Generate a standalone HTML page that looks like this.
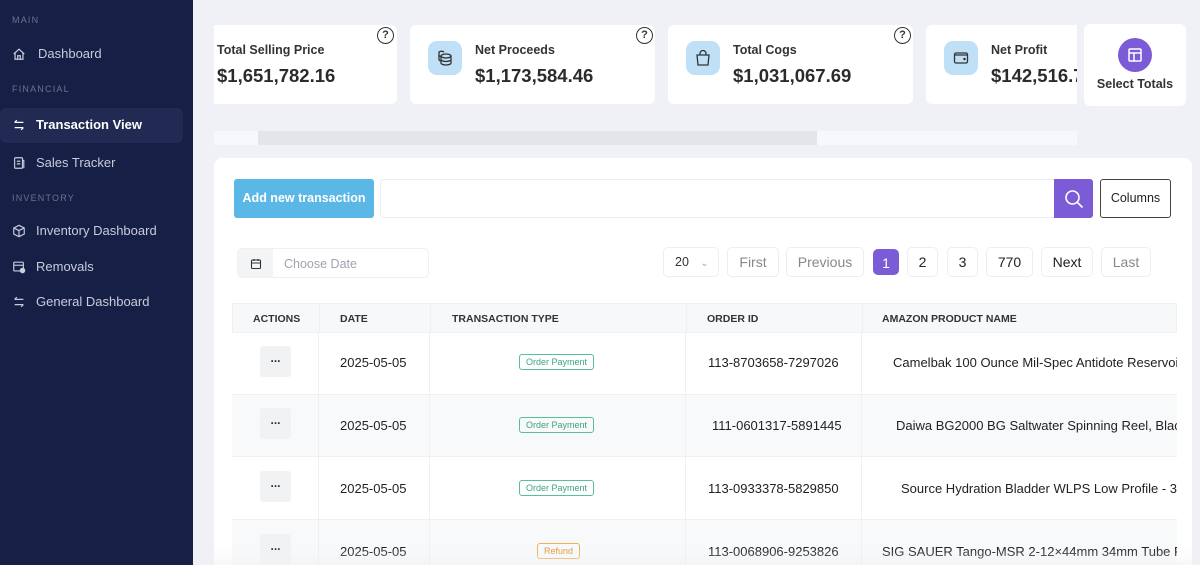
<!DOCTYPE html>
<html style="overflow:hidden;height:565px"><head><style>
*{box-sizing:border-box;margin:0;padding:0}
body{width:1200px;height:565px;overflow:hidden;background:#eff1f6;font-family:"Liberation Sans",sans-serif;position:relative}
.sb{position:absolute;left:0;top:0;width:193px;height:565px;background:#161f45}
.sec{position:absolute;left:12px;font-size:9px;letter-spacing:1.2px;color:#6c7391}
.it{position:absolute;left:12px;font-size:13px;color:#c8ccdb;display:flex;align-items:center;gap:10px}
.it svg{width:14px;height:14px}
.act{position:absolute;left:0;top:108px;width:183px;height:35px;background:#202a52;border-radius:6px}
.card{position:absolute;top:25px;height:79px;background:#fff;border-radius:6px;overflow:hidden}
.lbl{position:absolute;font-size:12.5px;font-weight:bold;color:#333}
.val{position:absolute;font-size:18.5px;font-weight:bold;color:#2b2b2b}
.ic{position:absolute;left:18px;top:16px;width:34px;height:34px;border-radius:9px;background:#bfe0f7;display:flex;align-items:center;justify-content:center}
.q{position:absolute;top:2px;width:17px;height:17px;border:1.5px solid #333;border-radius:50%;font-size:11px;font-weight:bold;text-align:center;line-height:14px;color:#333}
.panel{position:absolute;left:214px;top:158px;width:978px;height:407px;background:#fff;border-radius:8px 8px 0 0}
.pg{position:absolute;top:247px;height:30px;border:1px solid #eceef1;border-radius:5px;font-size:14px;color:#888;text-align:center;line-height:28px;background:#fff}
.th{position:absolute;top:303px;height:30px;background:#f7f8fa;left:232px;width:945px;border:1px solid #eef0f2}
.th span{position:absolute;top:9px;font-size:10.5px;font-weight:bold;color:#333}
.row{position:absolute;left:232px;width:945px;border-bottom:1px solid #eef0f2}
.row .c{position:absolute;top:0;bottom:0;border-left:1px solid #eef0f2}
.row span{position:absolute;font-size:13px;color:#222;white-space:nowrap}
.dots{position:absolute;left:28px;width:31px;height:31px;background:#f1f2f4;border-radius:3px;font-size:12px;font-weight:bold;text-align:center;line-height:24px;color:#333}
.bd{position:absolute;font-size:9px;border:1px solid #57c09a;color:#3aa57c;border-radius:3px;padding:2px 6px;white-space:nowrap}
</style></head><body>
<div class="sb">
<div class="sec" style="top:15px">MAIN</div>
<div class="it" style="top:46px"><svg viewBox="0 0 16 16" fill="none" stroke="#c8ccdb" stroke-width="1.4"><path d="M2 8 8 2.5 14 8M3.5 6.8V14h9V6.8M6.5 14V10h3v4"/></svg><span style="margin-left:2px">Dashboard</span></div>
<div class="sec" style="top:84px">FINANCIAL</div>
<div class="act"></div>
<div class="it" style="top:117px;color:#fff;font-weight:bold"><svg viewBox="0 0 16 16" fill="none" stroke="#fff" stroke-width="1.4"><path d="M3 5h10M3 5l2.5-2.5M13 11H3m10 0-2.5 2.5"/></svg>Transaction View</div>
<div class="it" style="top:155px"><svg viewBox="0 0 16 16" fill="none" stroke="#c8ccdb" stroke-width="1.3"><rect x="3" y="2" width="9" height="12" rx="1"/><path d="M5.5 6h4M5.5 9h4M12 5h1.5v9"/></svg>Sales Tracker</div>
<div class="sec" style="top:193px">INVENTORY</div>
<div class="it" style="top:223px"><svg viewBox="0 0 16 16" fill="none" stroke="#c8ccdb" stroke-width="1.3"><path d="M8 1.5 14 4.5v7L8 14.5 2 11.5v-7zM2 4.5 8 7.5l6-3M8 7.5v7"/></svg>Inventory Dashboard</div>
<div class="it" style="top:259px"><svg viewBox="0 0 16 16" fill="none" stroke="#c8ccdb" stroke-width="1.3"><rect x="2" y="2.5" width="11" height="10" rx="1"/><path d="M2 6h11"/><circle cx="12" cy="12" r="2.5" fill="#c8ccdb"/></svg>Removals</div>
<div class="it" style="top:294px"><svg viewBox="0 0 16 16" fill="none" stroke="#c8ccdb" stroke-width="1.4"><path d="M3 5h10M3 5l2.5-2.5M13 11H3m10 0-2.5 2.5"/></svg>General Dashboard</div>
</div>

<div class="card" style="left:214px;width:183px;border-radius:0 6px 6px 0"><div class="lbl" style="left:3px;top:18px">Total Selling Price</div><div class="val" style="left:3px;top:40px">$1,651,782.16</div><div class="q" style="left:163px">?</div></div>
<div class="card" style="left:410px;width:245px"><div class="ic"><svg width="20" height="20" viewBox="0 0 20 20" fill="none" stroke="#333" stroke-width="1.3"><ellipse cx="11" cy="8" rx="5" ry="2"/><path d="M6 8v7c0 1.1 2.2 2 5 2s5-.9 5-2V8M6 11.5c0 1.1 2.2 2 5 2s5-.9 5-2M9 4.2C8 3 6 3 4 4v8c.5.5 1 .8 2 1M4 7.5c.5.5 1 .8 2 1"/></svg></div><div class="lbl" style="left:65px;top:18px">Net Proceeds</div><div class="val" style="left:65px;top:40px">$1,173,584.46</div><div class="q" style="left:226px">?</div></div>
<div class="card" style="left:668px;width:245px"><div class="ic"><svg width="20" height="20" viewBox="0 0 20 20" fill="none" stroke="#333" stroke-width="1.3"><path d="M4 7h12l-1 10H5zM7 7V5.5a3 3 0 0 1 6 0V7"/></svg></div><div class="lbl" style="left:65px;top:18px">Total Cogs</div><div class="val" style="left:65px;top:40px">$1,031,067.69</div><div class="q" style="left:226px">?</div></div>
<div class="card" style="left:926px;width:151px;border-radius:6px 0 0 6px"><div class="ic"><svg width="20" height="20" viewBox="0 0 20 20" fill="none" stroke="#333" stroke-width="1.3"><rect x="3.5" y="5" width="13" height="10" rx="1.5"/><path d="M3.5 7h13"/><circle cx="13.5" cy="11" r=".6" fill="#333"/></svg></div><div class="lbl" style="left:65px;top:18px">Net Profit</div><div class="val" style="left:65px;top:40px">$142,516.7</div></div>
<div class="card" style="left:1084px;top:24px;width:102px;height:82px"><div style="position:absolute;left:34px;top:14px;width:34px;height:34px;border-radius:50%;background:#7c5bd6;display:flex;align-items:center;justify-content:center"><svg width="16" height="16" viewBox="0 0 16 16" fill="none" stroke="#fff" stroke-width="1.5"><rect x="2" y="2" width="12" height="12" rx="1"/><path d="M2 6h12M7 6v8"/></svg></div><div style="position:absolute;left:0;width:102px;text-align:center;top:53px;font-size:12.5px;font-weight:bold;color:#333">Select Totals</div></div>

<div style="position:absolute;left:214px;top:131px;width:863px;height:14px;background:#f7f8fb"></div>
<div style="position:absolute;left:258px;top:131px;width:559px;height:14px;background:#e4e5e8"></div>

<div class="panel"></div>
<div style="position:absolute;left:234px;top:179px;width:140px;height:39px;background:#5bb8e6;border-radius:3px;color:#fff;font-size:12.5px;font-weight:bold;text-align:center;line-height:39px">Add new transaction</div>
<div style="position:absolute;left:380px;top:179px;width:675px;height:39px;border:1px solid #eceef1;border-radius:3px 0 0 3px"></div>
<div style="position:absolute;left:1054px;top:179px;width:39px;height:39px;background:#7c5bd6;border-radius:0 3px 3px 0;display:flex;align-items:center;justify-content:center"><svg width="22" height="22" viewBox="0 0 22 22" fill="none" stroke="#fff" stroke-width="1.6"><circle cx="9.5" cy="9.5" r="6.5"/><path d="m14.5 14.5 5 5"/></svg></div>
<div style="position:absolute;left:1100px;top:179px;width:71px;height:39px;border:1px solid #444;border-radius:3px;font-size:12.5px;color:#222;text-align:center;line-height:37px">Columns</div>

<div style="position:absolute;left:237px;top:248px;width:192px;height:30px;border:1px solid #eef0f2;border-radius:5px;overflow:hidden"><div style="position:absolute;left:0;top:0;width:35px;height:30px;background:#f3f4f6;display:flex;align-items:center;justify-content:center"><svg width="12" height="12" viewBox="0 0 12 12" fill="none" stroke="#333" stroke-width="1.1"><rect x="1.5" y="2" width="9" height="8.5" rx="1"/><path d="M1.5 5h9M4 1v2M8 1v2"/></svg></div><div style="position:absolute;left:46px;top:8px;font-size:12.5px;color:#a0a3ad">Choose Date</div></div>

<div class="pg" style="left:663px;width:56px;font-size:12.5px;color:#333;text-align:left;padding-left:11px">20 <span style="color:#aaa;font-size:10px;margin-left:8px">&#8964;</span></div>
<div class="pg" style="left:727px;width:52px">First</div>
<div class="pg" style="left:786px;width:78px">Previous</div>
<div class="pg" style="left:873px;top:249px;height:26px;width:26px;background:#7c5bd6;border-color:#7c5bd6;color:#fff;line-height:26px">1</div>
<div class="pg" style="left:907px;width:31px;color:#222">2</div>
<div class="pg" style="left:947px;width:31px;color:#222">3</div>
<div class="pg" style="left:986px;width:47px;color:#222">770</div>
<div class="pg" style="left:1041px;width:52px;color:#222">Next</div>
<div class="pg" style="left:1101px;width:50px">Last</div>

<div class="th"><span style="left:20px">ACTIONS</span><span style="left:107px">DATE</span><span style="left:219px">TRANSACTION TYPE</span><span style="left:474px">ORDER ID</span><span style="left:649px">AMAZON PRODUCT NAME</span>
<div style="position:absolute;left:86px;top:0;bottom:0;border-left:1px solid #eef0f2"></div><div style="position:absolute;left:197px;top:0;bottom:0;border-left:1px solid #eef0f2"></div><div style="position:absolute;left:453px;top:0;bottom:0;border-left:1px solid #eef0f2"></div><div style="position:absolute;left:629px;top:0;bottom:0;border-left:1px solid #eef0f2"></div></div>

<div class="row" style="top:333px;height:62px;background:#fff"><div class="c" style="left:86px"></div><div class="c" style="left:197px"></div><div class="c" style="left:453px"></div><div class="c" style="left:629px"></div><div class="dots" style="top:13px">...</div><span style="left:108px;top:22px">2025-05-05</span><div class="bd" style="left:287px;top:21px">Order Payment</div><span style="left:476px;top:22px">113-8703658-7297026</span><span style="left:661px;top:22px">Camelbak 100 Ounce Mil-Spec Antidote Reservoir</span></div>
<div class="row" style="top:395px;height:62px;background:#f8f9fa"><div class="c" style="left:86px"></div><div class="c" style="left:197px"></div><div class="c" style="left:453px"></div><div class="c" style="left:629px"></div><div class="dots" style="top:13px">...</div><span style="left:108px;top:23px">2025-05-05</span><div class="bd" style="left:287px;top:22px">Order Payment</div><span style="left:480px;top:23px">111-0601317-5891445</span><span style="left:664px;top:23px">Daiwa BG2000 BG Saltwater Spinning Reel, Black</span></div>
<div class="row" style="top:457px;height:63px;background:#fff"><div class="c" style="left:86px"></div><div class="c" style="left:197px"></div><div class="c" style="left:453px"></div><div class="c" style="left:629px"></div><div class="dots" style="top:14px">...</div><span style="left:108px;top:24px">2025-05-05</span><div class="bd" style="left:287px;top:23px">Order Payment</div><span style="left:476px;top:24px">113-0933378-5829850</span><span style="left:669px;top:24px">Source Hydration Bladder WLPS Low Profile - 3 L</span></div>
<div class="row" style="top:520px;height:45px;background:#f8f9fa;border-bottom:none"><div class="c" style="left:86px"></div><div class="c" style="left:197px"></div><div class="c" style="left:453px"></div><div class="c" style="left:629px"></div><div class="dots" style="top:14px">...</div><span style="left:108px;top:24px">2025-05-05</span><div class="bd" style="left:305px;top:23px;border-color:#f0b055;color:#e09530">Refund</div><span style="left:476px;top:24px">113-0068906-9253826</span><span style="left:650px;top:24px">SIG SAUER Tango-MSR 2-12×44mm 34mm Tube F1</span></div>
<div style="position:absolute;left:1177px;top:300px;width:15px;height:265px;background:#fff"></div>
<div style="position:absolute;left:193px;top:548px;width:1007px;height:17px;background:linear-gradient(rgba(255,255,255,0),rgba(240,241,244,.5))"></div>
</body></html>
